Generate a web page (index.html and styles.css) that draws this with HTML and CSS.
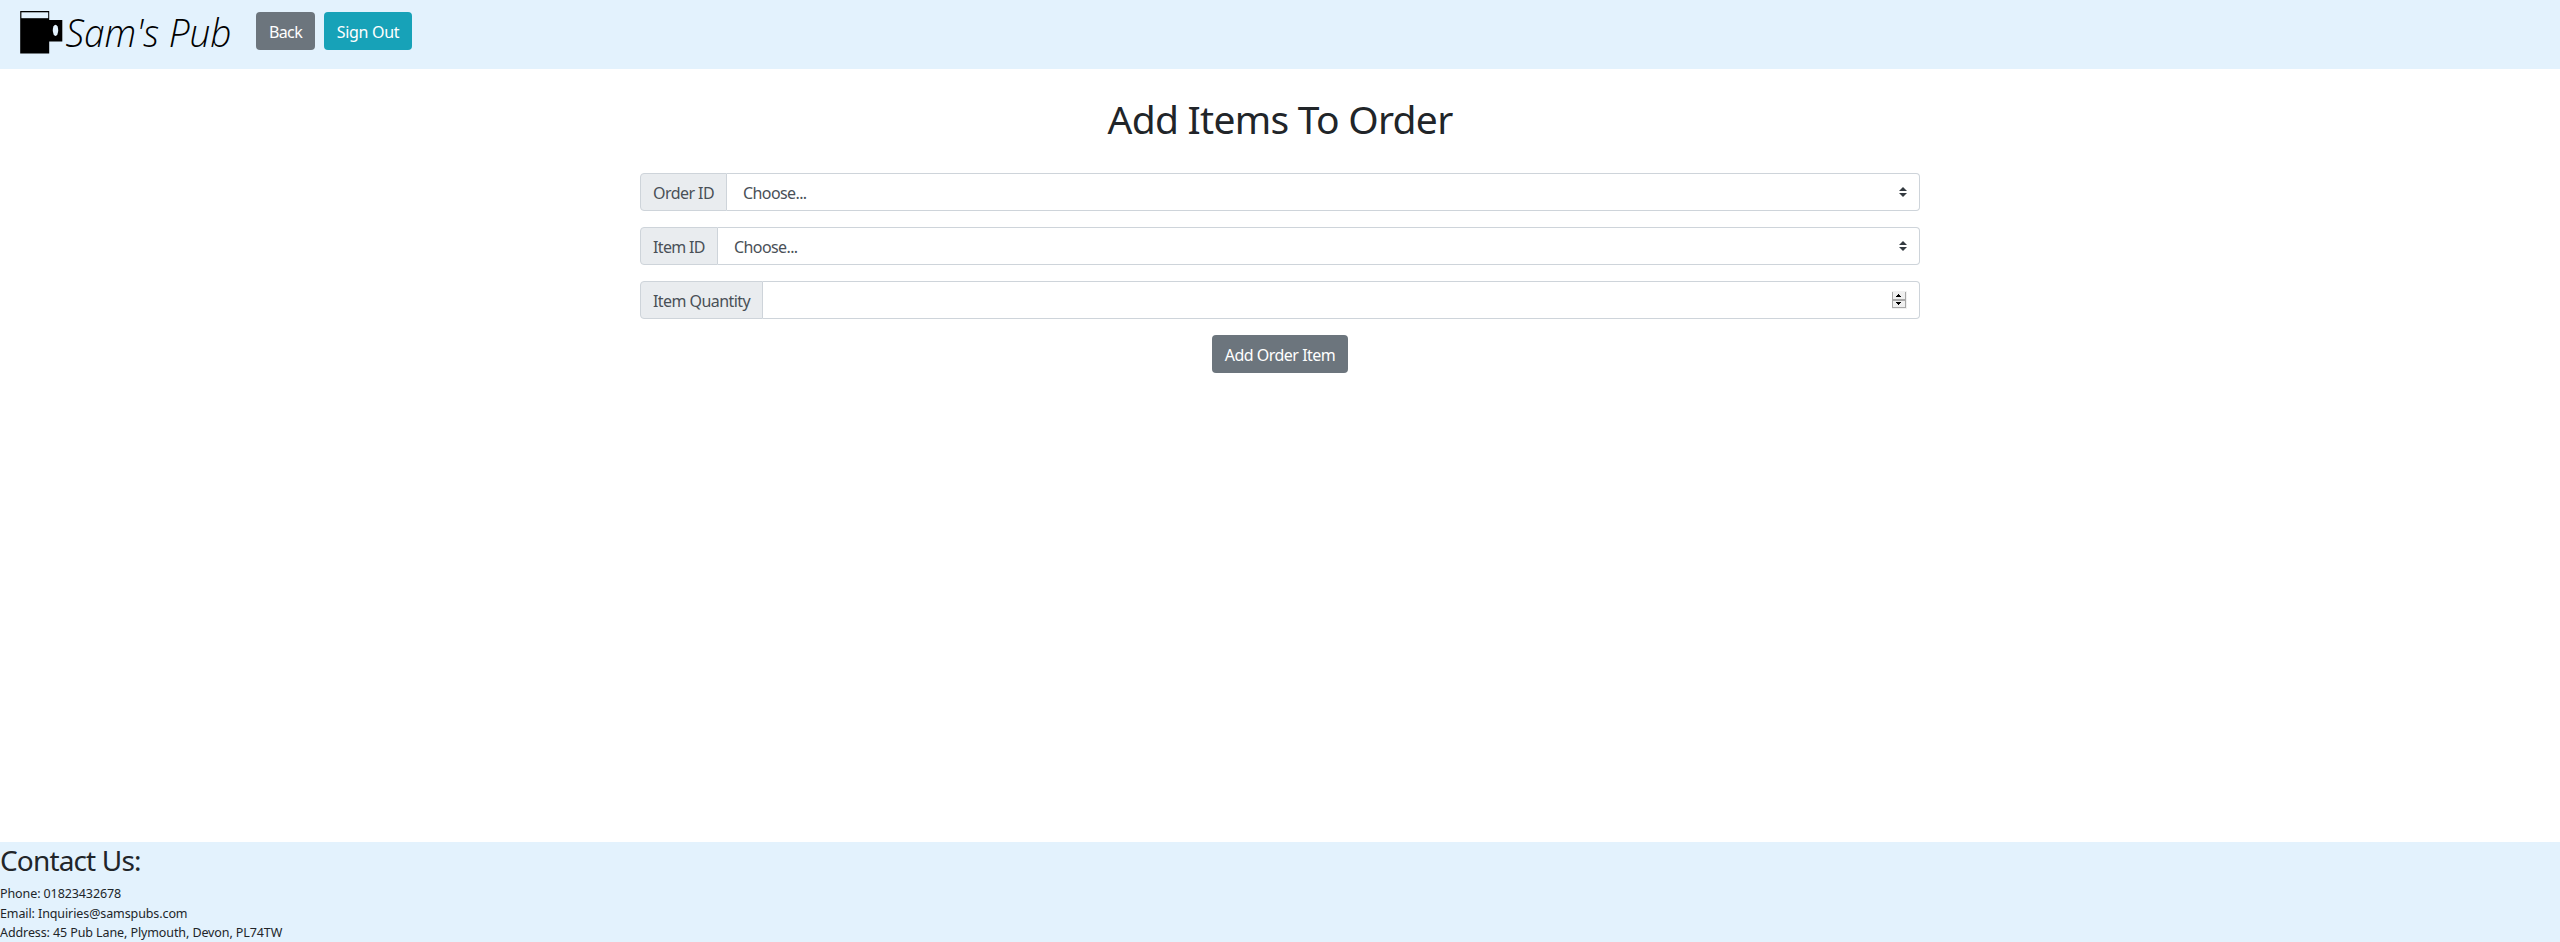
FILE: index.html
```html
<!DOCTYPE html>
<html lang="en">
<head>
<meta charset="utf-8">
<title>Sam's Pub</title>
<link rel="stylesheet" href="styles.css">
</head>
<body>
<nav class="navbar">
  <svg class="brand" width="216" height="45" viewBox="0 0 216 45" role="img" aria-label="Sam's Pub">
    <rect x="0.2" y="0" width="29" height="42.5" fill="#000"/>
    <rect x="1.4" y="1.3" width="26.8" height="5.9" fill="#e3f2fd"/>
    <rect x="28" y="9" width="14.3" height="21.5" fill="#000"/>
    <ellipse cx="35.5" cy="19.3" rx="2.7" ry="5.6" fill="#e3f2fd"/>
    <text class="brand-text" x="45.5" y="35.5" textLength="166" lengthAdjust="spacingAndGlyphs">Sam's Pub</text>
  </svg>
  <a class="btn btn-back">Back</a>
  <a class="btn btn-out">Sign Out</a>
</nav>
<main class="content">
  <h1 class="title">Add Items To Order</h1>
  <form class="form">
    <div class="group">
      <label class="addon addon-order">Order ID</label>
      <div class="control"><span class="value">Choose...</span>
        <svg class="caret" width="8" height="10" viewBox="0 0 4 5"><path fill="#343a40" d="M2 0L0 2h4zm0 5L0 3h4z"/></svg>
      </div>
    </div>
    <div class="group">
      <label class="addon addon-item">Item ID</label>
      <div class="control"><span class="value">Choose...</span>
        <svg class="caret" width="8" height="10" viewBox="0 0 4 5"><path fill="#343a40" d="M2 0L0 2h4zm0 5L0 3h4z"/></svg>
      </div>
    </div>
    <div class="group">
      <label class="addon addon-quantity">Item Quantity</label>
      <div class="control">
        <svg class="spinner" width="15" height="18" viewBox="0 0 15 18" shape-rendering="crispEdges">
          <path fill="#f0f0f0" d="M0 0h15v18H0z"/>
          <path fill="#a8a8a8" d="M0 1h1v16H0zM13 1h1v16h-1zM1 8h13v2H1zM1 16h13v1H1z"/>
          <path fill="#000" d="M6 3h1v1h1v1h1v1H4V5h1V4h1zM4 11h5v1H8v1H7v1H6v-1H5v-1H4z"/>
        </svg>
      </div>
    </div>
    <button class="btn btn-add" type="button">Add Order Item</button>
  </form>
</main>
<footer class="footer">
  <h2 class="contact">Contact Us:</h2>
  <p class="line">Phone: 01823432678</p>
  <p class="line">Email: Inquiries@samspubs.com</p>
  <p class="line">Address: 45 Pub Lane, Plymouth, Devon, PL74TW</p>
</footer>
</body>
</html>
```
FILE: styles.css
```css
* { box-sizing: border-box; }
body {
  margin: 0;
  height: 942px;
  display: flex;
  flex-direction: column;
  overflow: hidden;
  background: #fff;
  color: #212529;
  font: 16px/24px "Noto Sans", "Open Sans", sans-serif;
}
.navbar {
  height: 69px;
  flex: none;
  display: flex;
  align-items: flex-start;
  padding: 12px 20px;
  background: #e3f2fd;
}
.brand { flex: none; margin-right: 20px; margin-top: -1px; overflow: visible; }
.brand-text {
  font-family: "Open Sans", sans-serif;
  font-size: 38px;
  font-weight: 300;
  font-style: italic;
}
.btn {
  display: flex;
  align-items: center;
  justify-content: center;
  flex: none;
  height: 38px;
  padding: 2px 0 0;
  border: 0;
  border-radius: 4px;
  color: #fff;
  font: inherit;
  white-space: nowrap;
}
.btn-back { width: 59px; background: #6c757d; letter-spacing: -0.6px; }
.btn-out { width: 88px; margin-left: 9px; background: #17a2b8; letter-spacing: -0.3px; }
.content { flex: 1; padding-top: 26px; }
.title {
  margin: 0;
  text-align: center;
  font-size: 39px;
  line-height: 48px;
  font-weight: 400;
  letter-spacing: -0.73px;
}
.form {
  width: 1280px;
  margin: 30px auto 0;
  display: flex;
  flex-direction: column;
  align-items: center;
  gap: 16px;
}
.group { display: flex; width: 100%; height: 38px; }
.addon {
  flex: none;
  padding: 7px 0 5px 12px;
  border: 1px solid #ced4da;
  border-radius: 4px 0 0 4px;
  background: #e9ecef;
  color: #495057;
  white-space: nowrap;
}
.addon-order { width: 87px; letter-spacing: -0.55px; }
.addon-item { width: 78px; letter-spacing: -0.65px; }
.addon-quantity { width: 123px; letter-spacing: -0.57px; }
.control {
  flex: 1;
  display: flex;
  align-items: center;
  justify-content: space-between;
  padding: 0 12px 0 16px;
  border: 1px solid #ced4da;
  border-left: 0;
  border-radius: 0 4px 4px 0;
  color: #495057;
  letter-spacing: -0.6px;
}
.value { padding-top: 2px; }
.caret, .spinner { margin-left: auto; }
.btn-add { width: 136px; background: #6c757d; letter-spacing: -0.5px; }
.footer { flex: none; height: 100px; background: #e3f2fd; }
.contact {
  margin: 0 0 6px;
  font-size: 28px;
  line-height: 36px;
  font-weight: 400;
  letter-spacing: -0.85px;
}
.line { margin: 0; font-size: 12.5px; line-height: 19.5px; white-space: nowrap; letter-spacing: -0.1px; }
```
